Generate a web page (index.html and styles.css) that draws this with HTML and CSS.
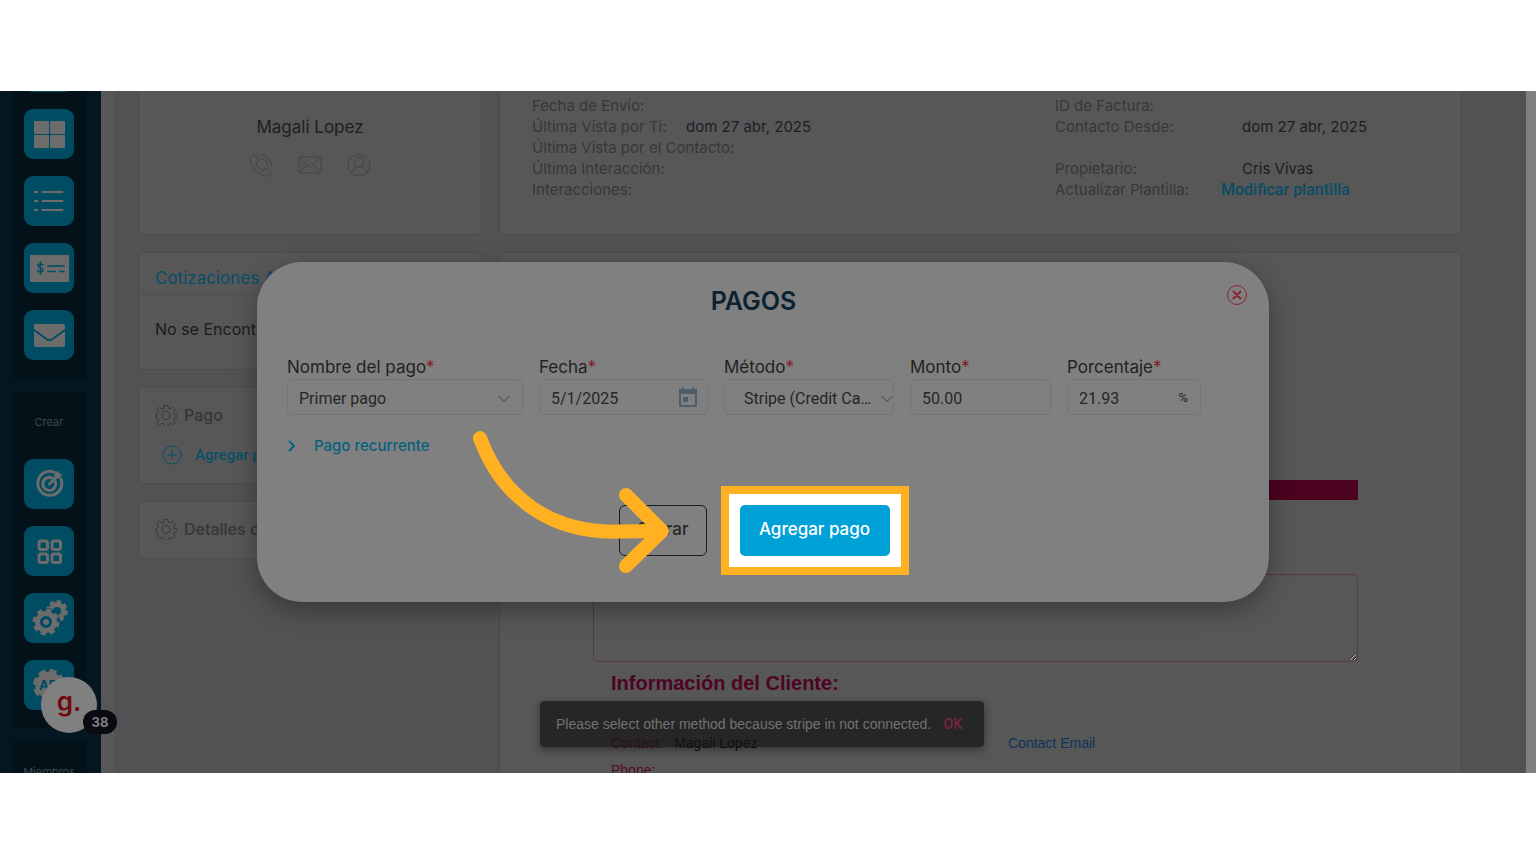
FILE: index.html
```html
<!DOCTYPE html>
<html lang="es">
<head>
<meta charset="utf-8">
<title>Pagos</title>
<link rel="stylesheet" href="styles.css">
</head>
<body>
<div class="stage">
  <nav class="sidebar" aria-label="Principal">
    <div class="panel panel-top">
      <button class="tile" aria-label="Inicio"></button>
      <button class="tile" aria-label="Tablero"><svg viewBox="0 0 50 50"><rect x="10" y="12" width="15" height="13" rx="1"/><rect x="26" y="12" width="15" height="13" rx="1"/><rect x="10" y="26" width="15" height="13" rx="1"/><rect x="26" y="26" width="15" height="13" rx="1"/></svg></button>
      <button class="tile" aria-label="Lista"><svg viewBox="0 0 50 50"><path class="ln thin" d="M11 16h2.500M18.500 16h20M11 25h2.500M18.500 25h20M11 34h2.500M18.500 34h20"/></svg></button>
      <button class="tile" aria-label="Cheques"><svg viewBox="0 0 50 50"><rect x="6" y="12" width="39" height="27" rx="1"/><path class="cut thin" d="M24 23h16M24 28.500h7M36 28.500h4M19 22c-1-1.500-5-1.500-5 .8 0 2.500 5 1.600 5 4.200 0 2.400-4.200 2.400-5.400.6M16.400 19v12"/></svg></button>
      <button class="tile" aria-label="Correo"><svg viewBox="0 0 50 50"><rect x="10" y="14" width="31" height="23" rx="2"/><path class="cut" d="M10 20l12.500 9q3 2 6 0L41 20"/></svg></button>
    </div>
    <div class="panel">
      <p class="panel-title">Crear</p>
      <button class="tile" aria-label="Objetivos"><svg viewBox="0 0 50 50"><path class="ln" d="M37 20A12 12 0 1 1 31 13.500M31.500 23A6.500 6.500 0 1 1 28 19M25.500 25L35 15.500"/><path d="M30 15.500l4-4 1 3.300 3.500.8-3.500 4-4.500-.5z"/></svg></button>
      <button class="tile" aria-label="Módulos"><svg viewBox="0 0 50 50"><g class="ln"><rect x="15" y="15" width="8.500" height="8.500" rx="2"/><rect x="28" y="15" width="8.500" height="8.500" rx="2"/><rect x="15" y="28" width="8.500" height="8.500" rx="2"/><rect x="28" y="28" width="8.500" height="8.500" rx="2"/></g></svg></button>
      <button class="tile" aria-label="Configuración"><svg viewBox="0 0 50 50"><circle class="teeth-s" cx="33" cy="18" r="9"/><circle class="ring" cx="33" cy="18" r="6.500"/><circle class="hole" cx="22" cy="29" r="14"/><circle class="teeth" cx="22" cy="29" r="11.500"/><circle class="ring" cx="22" cy="29" r="8.500"/><circle cx="22" cy="29" r="3"/></svg></button>
      <button class="tile" aria-label="API"><svg viewBox="0 0 50 50"><circle class="teeth-l" cx="25" cy="25" r="14"/><circle cx="25" cy="25" r="13.500"/><text class="api" x="15" y="30">API</text></svg></button>
    </div>
    <div class="panel">
      <p class="panel-title">Miembros</p>
    </div>
  </nav>

  <main class="main">
    <div class="column">
      <section class="card contact">
        <h2 class="contact-name">Magali Lopez</h2>
        <div class="contact-icons">
          <svg viewBox="0 0 24 24"><path d="M5 2C3 3 1 5 1.500 8c1 7 7 13.500 14 15 3 .5 5-.5 6-2.500.5-1 0-2-1-2.800l-3-2c-1-.6-2-.3-2.700.5l-1 1.200C10.500 16 8 13.500 7 10.500l1.300-1c.8-.7 1-1.700.5-2.600L7 3.500C6.500 2 6 1.600 5 2zM11.500 5.500a8 8 0 0 1 7.500 8M12 1.500A11.500 11.500 0 0 1 22.500 13"/></svg>
          <svg viewBox="0 0 24 24"><rect x="1" y="4" width="22" height="16" rx="1.500"/><path d="M2 5l8.500 8q1.500 1.200 3 0L22 5M2 19l7-7M22 19l-7-7"/></svg>
          <svg viewBox="0 0 24 24"><circle cx="12" cy="12" r="11"/><rect x="7.500" y="4" width="9" height="10" rx="4"/><path d="M4.500 20c.5-3 2.500-5 5-6h5c2.500 1 4.500 3 5 6"/></svg>
        </div>
      </section>
      <section class="card quotes">
        <h3 class="quotes-title">Cotizaciones Activas</h3>
        <p class="quotes-empty">No se Encontraron</p>
      </section>
      <section class="card settings">
        <h3 class="settings-title"><svg viewBox="0 0 24 24"><path d="M10 1.500h4l.6 3 2 .9 2.600-1.700 2.900 2.900-1.700 2.600.8 2 3 .6v3l-3 .7-.8 2 1.600 2.500-2.800 2.800-2.600-1.700-2 .9-.6 2.500h-4l-.6-2.500-2-.9-2.600 1.700L2 20l1.700-2.500-.9-2-2-.7v-3l2-.6.9-2L2 6.600l2.800-2.900 2.600 1.700 2-.9z"/><circle cx="12" cy="12.500" r="4.500"/></svg>Pago</h3>
        <button class="add"><svg viewBox="0 0 20 20"><circle cx="10" cy="10" r="9"/><path d="M10 5.500v9M5.500 10h9"/></svg>Agregar pago</button>
      </section>
      <section class="card settings">
        <h3 class="settings-title"><svg viewBox="0 0 24 24"><path d="M10 1.500h4l.6 3 2 .9 2.600-1.700 2.900 2.900-1.700 2.600.8 2 3 .6v3l-3 .7-.8 2 1.600 2.500-2.800 2.800-2.600-1.700-2 .9-.6 2.500h-4l-.6-2.500-2-.9-2.600 1.700L2 20l1.700-2.500-.9-2-2-.7v-3l2-.6.9-2L2 6.600l2.800-2.900 2.600 1.700 2-.9z"/><circle cx="12" cy="12.500" r="4.500"/></svg>Detalles de</h3>
      </section>
    </div>
    <div class="column">
      <section class="card info">
        <dl class="facts">
          <div><dt>Fecha de Envío:</dt><dd></dd></div>
          <div><dt>Última Vista por Ti:</dt><dd>dom 27 abr, 2025</dd></div>
          <div><dt>Última Vista por el Contacto:</dt><dd></dd></div>
          <div><dt>Última Interacción:</dt><dd></dd></div>
          <div><dt>Interacciones:</dt><dd></dd></div>
        </dl>
        <dl class="facts facts-wide">
          <div><dt>ID de Factura:</dt><dd></dd></div>
          <div><dt>Contacto Desde:</dt><dd>dom 27 abr, 2025</dd></div>
          <div></div>
          <div><dt>Propietario:</dt><dd>Cris Vivas</dd></div>
          <div class="with-link"><dt>Actualizar Plantilla:</dt><dd><a href="#plantilla">Modificar plantilla</a></dd></div>
        </dl>
      </section>
      <section class="card document">
        <div class="bar"></div>
        <textarea class="notes" aria-label="Notas"></textarea>
        <h2 class="client-title">Información del Cliente:</h2>
        <div class="client-row">
          <p><span class="pink">Contact:</span> <span>Magali Lopez</span></p>
          <a href="#email">Contact Email</a>
        </div>
        <p class="client-phone pink">Phone:</p>
      </section>
    </div>
  </main>
  <div class="scrollbar"></div>

  <div class="widget">
    <button class="widget-button" aria-label="Guía">g.</button>
    <span class="widget-badge">38</span>
  </div>

  <div class="toast" role="status">
    <span>Please select other method because stripe in not connected.</span>
    <button class="toast-ok">OK</button>
  </div>

  <div class="overlay">
    <form class="modal" role="dialog" aria-labelledby="modal-title">
      <button type="button" class="close" aria-label="Cerrar ventana"><svg viewBox="0 0 22 22"><circle cx="11" cy="11" r="9.500"/><path d="M7.500 7.500l7 7M14.500 7.500l-7 7"/></svg></button>
      <h1 class="modal-title" id="modal-title">PAGOS</h1>
      <div class="fields">
        <div class="field">
          <label for="nombre">Nombre del pago<b>*</b></label>
          <div class="control"><select id="nombre"><option>Primer pago</option></select><svg class="chevron" viewBox="0 0 12 8"><path d="M1 1.500l5 5 5-5"/></svg></div>
        </div>
        <div class="field">
          <label for="fecha">Fecha<b>*</b></label>
          <div class="control"><input id="fecha" type="text" value="5/1/2025"><svg class="calendar" viewBox="0 0 20 22"><path d="M2 4h16v16H2z"/><path class="fill" d="M1 3h18v5H1zM4 1h2v3H4zM14 1h2v3h-2zM5 11h5v5H5z"/></svg></div>
        </div>
        <div class="field">
          <label for="metodo">Método<b>*</b></label>
          <div class="control control-method"><select id="metodo"><option>Stripe (Credit Card)</option></select><svg class="chevron" viewBox="0 0 12 8"><path d="M1 1.500l5 5 5-5"/></svg></div>
        </div>
        <div class="field">
          <label for="monto">Monto<b>*</b></label>
          <div class="control"><input id="monto" type="text" value="50.00"></div>
        </div>
        <div class="field">
          <label for="porcentaje">Porcentaje<b>*</b></label>
          <div class="control"><input id="porcentaje" type="text" value="21.93"><span class="suffix">%</span></div>
        </div>
      </div>
      <button type="button" class="recurring"><svg viewBox="0 0 8 12"><path d="M1.500 1.500L6 6l-4.500 4.500"/></svg>Pago recurrente</button>
      <div class="actions">
        <button type="button" class="cancel">Cerrar</button>
        <div class="highlight"><button type="button" class="submit">Agregar pago</button></div>
      </div>
      <svg class="arrow" viewBox="0 0 200 150" aria-hidden="true"><path d="M10 12C32 72 82 108 150 105.500L190 105M156 69L192 105 156 140"/></svg>
    </form>
  </div>
</div>
</body>
</html>
```
FILE: styles.css
```css
* { box-sizing: border-box; }
body {
  margin: 0;
  padding: 91px 0;
  background: #fff;
  font-family: Inter, "Noto Sans", sans-serif;
  color: #1f2224;
}
h1, h2, h3, p, dl, dd { margin: 0; font-weight: 400; }
button { padding: 0; border: 0; background: none; font: inherit; color: inherit; cursor: pointer; }
svg { display: block; fill: none; stroke-linecap: round; stroke-linejoin: round; }
a { text-decoration: none; }

.stage {
  position: relative;
  display: grid;
  grid-template-columns: 101px 1fr 10px;
  height: calc(100vh - 182px);
  overflow: hidden;
  background: #505254;
}

/* Sidebar */
.sidebar {
  display: flex;
  flex-direction: column;
  gap: 14px;
  min-height: 0;
  padding: 0 15px 0 12px;
  background: #04161f;
}
.panel {
  display: flex;
  flex-direction: column;
  flex-shrink: 0;
  align-items: center;
  gap: 17px;
  padding-bottom: 18px;
  background: #031219;
}
.panel-top { margin-top: -49px; }
.panel-title {
  padding: 22px 0 12px;
  font-size: 11px;
  line-height: 16px;
  color: #3b464b;
}
.tile {
  width: 50px;
  height: 50px;
  border-radius: 9px;
  background: #004c63;
}
.tile svg { width: 50px; height: 50px; fill: #6c6c6c; }
.tile .ln { fill: none; stroke: #6c6c6c; stroke-width: 3; }
.tile .cut { fill: none; stroke: #004c63; stroke-width: 2; }
.tile .thin { stroke-width: 2; }
.tile .cut.thin { stroke-width: 1.5; }
.tile .ring { fill: none; stroke: #6c6c6c; stroke-width: 5; }
.tile .teeth { fill: none; stroke: #6c6c6c; stroke-width: 4; stroke-dasharray: 5 4; stroke-linecap: butt; }
.tile .teeth-s { fill: none; stroke: #6c6c6c; stroke-width: 4; stroke-dasharray: 4 3; stroke-linecap: butt; }
.tile .teeth-l { fill: none; stroke: #6c6c6c; stroke-width: 4; stroke-dasharray: 7 4; stroke-linecap: butt; }
.tile .hole { fill: #004c63; }
.tile .api { fill: #004c63; font-size: 13px; font-weight: 700; }

/* Page */
.main {
  display: grid;
  grid-template-columns: 344px 1fr;
  gap: 17px;
  min-height: 0;
  padding: 0 64px 0 24px;
  border-left: 13px solid #575757;
}
.column { display: flex; flex-direction: column; gap: 17px; min-height: 0; }
.card {
  flex-shrink: 0;
  border: 1px solid #4a4d4e;
  border-radius: 5px;
  background: #575757;
}
.contact, .info { height: 144px; border-top: 0; border-radius: 0 0 5px 5px; }
.contact { display: flex; flex-direction: column; align-items: center; gap: 14px; padding-top: 24px; }
.contact-name { font-size: 17px; line-height: 24px; color: #1b1f22; }
.contact-icons { display: flex; gap: 25px; }
.contact-icons svg { width: 24px; height: 24px; stroke: #434647; stroke-width: 1; }
.quotes { height: 118px; }
.quotes-title {
  padding: 13px 16px 4px;
  border-bottom: 1px solid #4d5051;
  font-size: 17px;
  line-height: 24px;
  color: #084d6b;
}
.quotes-empty { padding: 22px 16px; font-size: 16px; line-height: 24px; color: #1a1a1a; }
.settings { padding: 15px 16px 17px; }
.settings-title {
  display: flex;
  align-items: center;
  gap: 7px;
  font-size: 16px;
  font-weight: 500;
  line-height: 24px;
  color: #343637;
}
.settings-title svg { width: 22px; height: 22px; stroke: #343637; stroke-width: 1; }
.add {
  display: flex;
  align-items: center;
  gap: 13px;
  margin: 17px 0 0 7px;
  font: 500 15px/22px Roboto, sans-serif;
  color: #07506a;
}
.add svg { width: 20px; height: 20px; stroke: #07506a; stroke-width: 1; }

.info {
  display: grid;
  grid-template-columns: 1fr 374px;
  padding: 4px 32px;
}
.facts div { display: flex; height: 21px; font-size: 15px; line-height: 21px; white-space: nowrap; }
.facts dt { min-width: 154px; color: #363839; }
.facts dd { color: #1a1e26; }
.facts-wide dt { min-width: 187px; }
.facts-wide .with-link dt { min-width: 166px; }
.facts a { font: 500 16px/21px Roboto, sans-serif; color: #084e63; }

.document {
  flex: 1 0 0;
  padding: 227px 103px 0 93px;
  font-family: "Liberation Sans", Arial, sans-serif;
}
.bar { height: 20px; background: #4c0320; }
.notes {
  display: block;
  width: 100%;
  height: 88px;
  margin: 74px 0 9px;
  border: 1px solid #573947;
  border-radius: 5px;
  background: none;
}
.client-title {
  padding-left: 18px;
  font-size: 20px;
  font-weight: 700;
  line-height: 24px;
  color: #4e0423;
}
.client-row {
  display: grid;
  grid-template-columns: 397px 1fr;
  padding: 38px 18px 0;
  font-size: 14px;
  line-height: 20px;
  color: #0c0c0c;
}
.client-row p { display: flex; gap: 11px; }
.client-row a { color: #0e335e; }
.client-phone { padding: 7px 18px 0; font-size: 14px; line-height: 20px; }
.pink { color: #500a2a; }
.scrollbar { background: #808080; }

/* Floating help widget */
.widget { position: absolute; left: 41px; bottom: 40px; }
.widget-button {
  display: block;
  width: 56px;
  height: 56px;
  padding-bottom: 8px;
  border-radius: 50%;
  background: #808080;
  font-size: 26px;
  font-weight: 600;
  color: #720a0d;
}
.widget-badge {
  position: absolute;
  top: 33px;
  left: 42px;
  width: 34px;
  border-radius: 12px;
  background: #090a12;
  font-size: 13px;
  font-weight: 700;
  line-height: 24px;
  text-align: center;
  color: #808080;
}

/* Toast */
.toast {
  position: absolute;
  left: 540px;
  bottom: 26px;
  display: flex;
  align-items: center;
  justify-content: space-between;
  width: 444px;
  height: 46px;
  padding: 0 22px 0 16px;
  border-radius: 4px;
  background: #161616bf;
  box-shadow: 0 3px 8px #0006;
  font: 14px/20px "Liberation Sans", Arial, sans-serif;
  color: #727272;
  white-space: nowrap;
}
.toast-ok { font: 500 14px/20px Roboto, sans-serif; color: #7a2343; }

/* Payment dialog */
.overlay {
  position: absolute;
  inset: 0 10px 0 0;
  display: flex;
  align-items: center;
  justify-content: center;
  pointer-events: none;
}
.modal {
  position: relative;
  width: 1012px;
  padding: 24px 29px 27px 30px;
  border-radius: 45px;
  background: #808080;
  box-shadow: 0 8px 24px #0005;
  pointer-events: auto;
}
.close { position: absolute; top: 22px; right: 21px; }
.close svg { width: 22px; height: 22px; stroke: #88262b; stroke-width: 1; }
.close path { stroke-width: 2; }
.modal-title {
  padding-right: 20px;
  font-size: 25px;
  font-weight: 600;
  line-height: 30px;
  text-align: center;
  color: #0c2230;
}
.fields {
  display: grid;
  grid-template-columns: 236px 169px 170px 141px 134px;
  gap: 16px;
  margin-top: 39px;
}
.field label { display: block; font-size: 17px; line-height: 24px; color: #222; white-space: nowrap; }
.field b { font-weight: 400; color: #851d28; }
.control {
  display: flex;
  align-items: center;
  height: 36px;
  padding-right: 12px;
  border: 1px solid #727678;
  border-radius: 5px;
}
.control input, .control select {
  flex: 1;
  min-width: 0;
  height: 34px;
  padding: 2px 0 0 11px;
  border: 0;
  outline: 0;
  background: none;
  appearance: none;
  font: 16px/24px Roboto, sans-serif;
  color: #262626;
  text-overflow: ellipsis;
}
.control select { padding-top: 4px; }
.control-method { padding-right: 0; }
.control-method select { padding-left: 19px; }
.control-method .chevron { margin-left: 8px; }
.chevron { width: 12px; height: 8px; margin-top: 4px; stroke: #566268; stroke-width: 1.5; }
.calendar { width: 20px; height: 22px; margin-right: -3px; stroke: #4f5d67; stroke-width: 2; }
.calendar .fill { fill: #4f5d67; stroke: none; }
.suffix { padding-top: 2px; font: 13px/20px Roboto, sans-serif; color: #262626; }
.recurring {
  display: flex;
  align-items: center;
  gap: 18px;
  margin: 20px 0 0 1px;
  font-size: 15px;
  font-weight: 500;
  line-height: 22px;
  color: #06607f;
}
.recurring svg { width: 8px; height: 12px; stroke: #06607f; stroke-width: 2; }
.actions {
  display: flex;
  align-items: center;
  justify-content: center;
  gap: 14px;
  margin-top: 29px;
}
.cancel {
  width: 88px;
  height: 51px;
  padding-bottom: 3px;
  border: 1px solid #1c1c1c;
  border-radius: 6px;
  font-size: 17px;
  font-weight: 500;
  color: #262626;
}
.highlight { padding: 11px; border: 8px solid #ffb122; background: #fff; }
.submit {
  display: block;
  width: 150px;
  height: 51px;
  padding-bottom: 3px;
  border-radius: 5px;
  background: #00a1d7;
  font-size: 17px;
  font-weight: 500;
  color: #fff;
}
.arrow {
  position: absolute;
  top: 164px;
  left: 213px;
  width: 200px;
  height: 150px;
  stroke: #ffb122;
  stroke-width: 14;
  pointer-events: none;
}
```
